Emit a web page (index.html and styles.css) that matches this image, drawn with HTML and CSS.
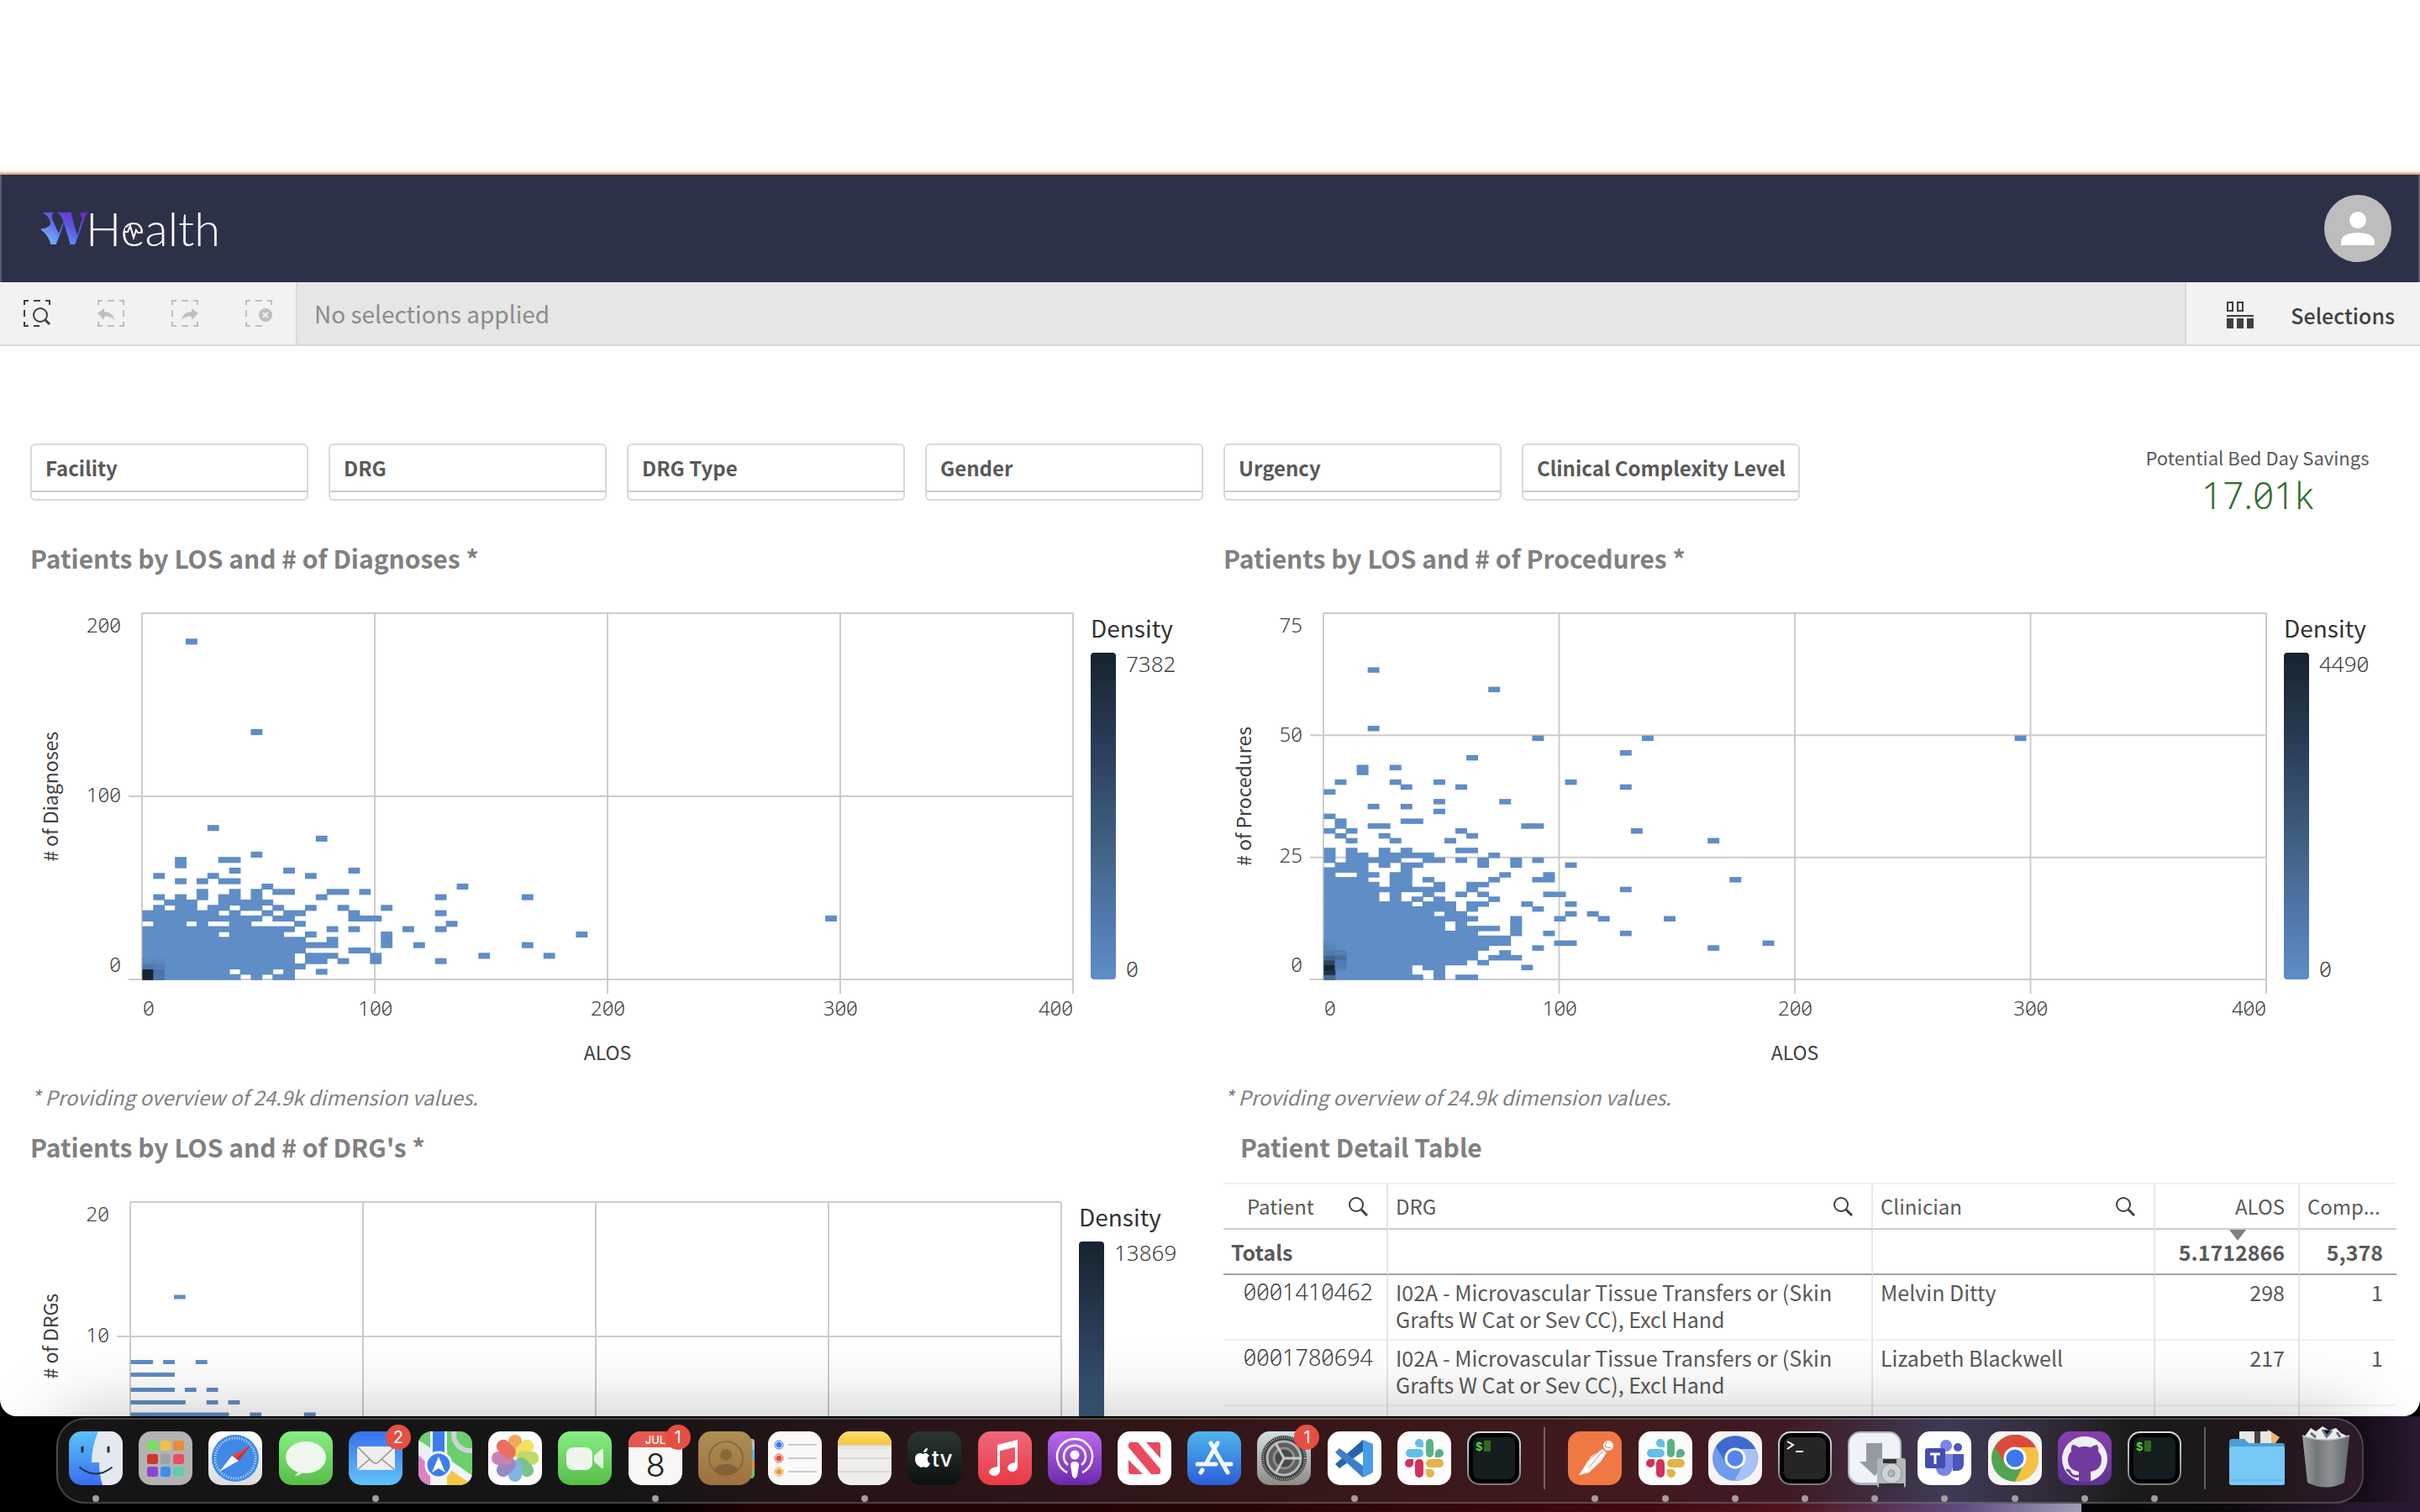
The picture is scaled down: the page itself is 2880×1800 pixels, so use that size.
FILE: index.html
```html
<!DOCTYPE html>
<html lang="en">
<head>
<meta charset="utf-8">
<title>WHealth</title>
<link rel="stylesheet" href="styles.css">
</head>
<body>
<svg class="defs" aria-hidden="true">
  <defs>
    <linearGradient id="gLogo" x1="1" y1="0" x2="0" y2="1"><stop offset="0" stop-color="#7a1fc8"/><stop offset=".4" stop-color="#5a55e0"/><stop offset="1" stop-color="#7cc4ff"/></linearGradient>
    <linearGradient id="gBlue" x2="0" y2="1"><stop stop-color="#5ac3f8"/><stop offset="1" stop-color="#3a6df0"/></linearGradient>
    <linearGradient id="gMail" x2="0" y2="1"><stop stop-color="#3a70ee"/><stop offset="1" stop-color="#5fc4fb"/></linearGradient>
    <linearGradient id="gStore" x2="0" y2="1"><stop stop-color="#4fb4ee"/><stop offset="1" stop-color="#2a5fd8"/></linearGradient>
    <linearGradient id="gGreen" x2="0" y2="1"><stop stop-color="#86ee82"/><stop offset="1" stop-color="#58bd48"/></linearGradient>
    <linearGradient id="gWhite" x2="0" y2="1"><stop stop-color="#fff"/><stop offset="1" stop-color="#dcdcdc"/></linearGradient>
    <linearGradient id="gRed" x2="0" y2="1"><stop stop-color="#f0677a"/><stop offset="1" stop-color="#e83a44"/></linearGradient>
    <linearGradient id="gPurple" x2="0" y2="1"><stop stop-color="#bc6af0"/><stop offset="1" stop-color="#6d28ab"/></linearGradient>
    <linearGradient id="gGit" x2="0" y2="1"><stop stop-color="#8a3fae"/><stop offset="1" stop-color="#5b3494"/></linearGradient>
    <linearGradient id="gYellow" x2="0" y2="1"><stop stop-color="#fbdf6b"/><stop offset="1" stop-color="#f5c63c"/></linearGradient>
    <linearGradient id="gBrown" x2="0" y2="1"><stop stop-color="#ae8e55"/><stop offset="1" stop-color="#9c7140"/></linearGradient>
    <linearGradient id="gTv" x2="0" y2="1"><stop stop-color="#2b3833"/><stop offset="1" stop-color="#0b0f11"/></linearGradient>
    <linearGradient id="gMetal" x2="0" y2="1"><stop stop-color="#d6e3ea"/><stop offset="1" stop-color="#77797b"/></linearGradient>
    <linearGradient id="gGrey" x2="0" y2="1"><stop stop-color="#d3dfe5"/><stop offset="1" stop-color="#8d8c88"/></linearGradient>
    <linearGradient id="gBin" x2="1" y2="0"><stop stop-color="#9ba0a2"/><stop offset=".3" stop-color="#73787a"/><stop offset=".6" stop-color="#8b9092"/><stop offset="1" stop-color="#65696b"/></linearGradient>
    <symbol id="lens" viewBox="0 0 24 24"><circle cx="10" cy="10" r="8" fill="none" stroke="currentColor" stroke-width="2"/><path d="M16 16l7 7" stroke="currentColor" stroke-width="3"/></symbol>
    <symbol id="slack" viewBox="0 0 64 64"><rect width="64" height="64" rx="15" fill="#fcfcfc"/>
      <g fill="#5fc0ea"><rect x="10" y="21" width="21" height="10" rx="5"/><path d="M31 19h-5a5 5 0 1 1 5-5z"/></g>
      <g fill="#58b283"><rect x="34" y="9" width="9" height="22" rx="5"/><path d="M45 31v-5a5 5 0 1 1 5 5z"/></g>
      <g fill="#e2b34a"><rect x="34" y="33" width="21" height="10" rx="5"/><path d="M34 45h5a5 5 0 1 1-5 5z"/></g>
      <g fill="#d3315a"><rect x="21" y="33" width="10" height="22" rx="5"/><path d="M19 33v5a5 5 0 1 1-5-5z"/></g></symbol>
    <symbol id="shell" viewBox="0 0 64 64"><rect width="64" height="64" rx="15" fill="url(#gMetal)"/><rect x="2" y="2" width="60" height="60" rx="13" fill="#000"/><rect x="7" y="7" width="50" height="50" rx="8" fill="#151d20"/></symbol>
  </defs>
</svg>

<div class="window">
  <header class="brandbar">
    <a class="logo" href="#" aria-label="WHealth">
      <svg class="logo-mark" viewBox="95 190 112 113" preserveAspectRatio="none"><g fill="url(#gLogo)"><path d="M100 190h27q-7 6-5 22l15 52 10-38 2 2-10 44-8 31h-12q-4-30-24-54 22-6 23-18 2-22-18-41zM133 190h35q-3 6 0 18l12 62 11-60q-6-12-3-20h19q-10 8-12 28l-20 85h-11l-16-80q-4-24-15-33z"/></g></svg>
      <span class="logo-text">Health</span>
      <svg class="logo-pulse" viewBox="0 0 22 20"><path d="M3 5h16v8H3z" fill="#2d3148"/><path d="M1 10h5l3-7 4 14 3-9 2 3h3" fill="none" stroke="#fff" stroke-width="2"/></svg>
    </a>
    <button class="avatar" aria-label="Account"><svg viewBox="0 0 80 80"><circle cx="40" cy="40" r="40" fill="#bdbdbd"/><circle cx="40" cy="30" r="10" fill="#fff"/><path d="M20 60v-5q2-10 20-10t20 10v5z" fill="#fff"/></svg></button>
  </header>

  <div class="toolbar">
    <div class="tools">
      <button aria-label="Smart search"><svg viewBox="0 0 32 32"><path d="M1 6V1h5M12 1h8M26 1h5v5M1 12v8M1 26v5h5M12 31h7" fill="none" stroke="currentColor" stroke-width="2"/><circle cx="20" cy="18" r="8" fill="none" stroke="currentColor" stroke-width="2"/><path d="M25 23l6 6" stroke="currentColor" stroke-width="3"/></svg></button>
      <button aria-label="Step back" disabled><svg viewBox="0 0 32 32"><path d="M1 6V1h5M12 1h8M26 1h5v5M31 12v8M1 26v5h5M12 31h8M31 26v5h-5" fill="none" stroke="currentColor" stroke-width="2"/><path d="M0 16l8-6v4q10 0 12 10-5-5-12-4v4z" fill="currentColor"/></svg></button>
      <button aria-label="Step forward" disabled><svg viewBox="0 0 32 32"><path d="M1 6V1h5M12 1h8M26 1h5v5M1 12v8M1 26v5h5M12 31h8M31 26v5h-5" fill="none" stroke="currentColor" stroke-width="2"/><path d="M32 16l-8-6v4q-10 0-12 10 5-5 12-4v4z" fill="currentColor"/></svg></button>
      <button aria-label="Clear all selections" disabled><svg viewBox="0 0 32 32"><path d="M1 6V1h5M12 1h8M26 1h5v5M1 12v8M1 26v5h5M12 31h8" fill="none" stroke="currentColor" stroke-width="2"/><circle cx="24" cy="18" r="8" fill="currentColor"/><path d="M21 15l6 6M27 15l-6 6" stroke="#f2f2f2" stroke-width="2"/></svg></button>
    </div>
    <p class="status">No selections applied</p>
    <button class="selections"><svg viewBox="0 0 32 32"><path d="M1 1h6v10H1zM13 1h6v10h-6z" fill="none" stroke="currentColor" stroke-width="2"/><path d="M0 16h32v2H0zM0 20h8v12H0zM12 20h8v12h-8zM24 20h8v12h-8z" fill="currentColor"/></svg>Selections</button>
  </div>

  <main class="sheet">
    <button class="filter"><span>Facility</span></button>
    <button class="filter"><span>DRG</span></button>
    <button class="filter"><span>DRG Type</span></button>
    <button class="filter"><span>Gender</span></button>
    <button class="filter"><span>Urgency</span></button>
    <button class="filter"><span>Clinical Complexity Level</span></button>
    <section class="kpi"><h2>Potential Bed Day Savings</h2><p>17.01k</p></section>

    <section class="card">
      <h2 class="title">Patients by LOS and # of Diagnoses *</h2>
      <div class="chart chart-wide-axis">
        <div class="y-title"><span># of Diagnoses</span></div>
        <div class="y-axis"><span>200</span><span>100</span><span>0</span></div>
        <svg class="plot" data-chart="diagnoses"></svg>
        <div class="legend"><h3>Density</h3><div class="scale"><i></i><div class="range"><span>7382</span><span>0</span></div></div></div>
        <div class="x-axis"><span>0</span><span>100</span><span>200</span><span>300</span><span>400</span></div>
        <div class="x-title">ALOS</div>
      </div>
      <p class="note">* Providing overview of 24.9k dimension values.</p>
    </section>

    <section class="card">
      <h2 class="title">Patients by LOS and # of Procedures *</h2>
      <div class="chart">
        <div class="y-title"><span># of Procedures</span></div>
        <div class="y-axis"><span>75</span><span>50</span><span>25</span><span>0</span></div>
        <svg class="plot" data-chart="procedures"></svg>
        <div class="legend"><h3>Density</h3><div class="scale"><i></i><div class="range"><span>4490</span><span>0</span></div></div></div>
        <div class="x-axis"><span>0</span><span>100</span><span>200</span><span>300</span><span>400</span></div>
        <div class="x-title">ALOS</div>
      </div>
      <p class="note">* Providing overview of 24.9k dimension values.</p>
    </section>

    <section class="card">
      <h2 class="title">Patients by LOS and # of DRG's *</h2>
      <div class="chart chart-wide-legend chart-short">
        <div class="y-title"><span># of DRGs</span></div>
        <div class="y-axis"><span>20</span><span>10</span><span></span></div>
        <svg class="plot" data-chart="drgs"></svg>
        <div class="legend"><h3>Density</h3><div class="scale"><i></i><div class="range"><span>13869</span></div></div></div>
      </div>
    </section>

    <section class="card">
      <h2 class="title title-table">Patient Detail Table</h2>
      <table class="details">
        <colgroup><col class="c-patient"><col><col class="c-clinician"><col class="c-alos"><col class="c-comp"></colgroup>
        <thead>
          <tr><th><div class="head head-in">Patient<button aria-label="Search Patient"><svg><use href="#lens"/></svg></button></div></th>
          <th><div class="head">DRG<button aria-label="Search DRG"><svg><use href="#lens"/></svg></button></div></th>
          <th><div class="head">Clinician<button aria-label="Search Clinician"><svg><use href="#lens"/></svg></button></div></th>
          <th class="num sorted">ALOS</th><th>Comp...</th></tr>
          <tr class="totals"><th>Totals</th><td></td><td></td><td class="num">5.1712866</td><td class="num">5,378</td></tr>
        </thead>
        <tbody>
          <tr><td class="num id">0001410462</td><td>I02A - Microvascular Tissue Transfers or (Skin<br>Grafts W Cat or Sev CC), Excl Hand</td><td>Melvin Ditty</td><td class="num">298</td><td class="num">1</td></tr>
          <tr><td class="num id">0001780694</td><td>I02A - Microvascular Tissue Transfers or (Skin<br>Grafts W Cat or Sev CC), Excl Hand</td><td>Lizabeth Blackwell</td><td class="num">217</td><td class="num">1</td></tr>
          <tr class="spare"><td></td><td></td><td></td><td></td><td></td></tr>
        </tbody>
      </table>
    </section>
  </main>
</div>

<footer class="desktop">
<nav class="dock" aria-label="Dock">
  <button class="app open" aria-label="Finder"><svg viewBox="0 0 64 64"><clipPath id="r"><rect width="64" height="64" rx="15"/></clipPath><g clip-path="url(#r)"><rect width="64" height="64" fill="url(#gBlue)"/><path d="M35 0q-8 18-8 37h9q0 15 4 27h24V0z" fill="#e4e8ef"/></g><path d="M16 19v5M47 19v5" stroke="#23303f" stroke-width="3" stroke-linecap="round"/><path d="M13 43q19 15 38 0" fill="none" stroke="#23303f" stroke-width="2" stroke-linecap="round"/></svg></button>
  <button class="app" aria-label="Launchpad"><svg viewBox="0 0 64 64"><rect width="64" height="64" rx="15" fill="#b3b3b4"/><rect x="10" y="11" width="13" height="12" rx="3" fill="#78e05c"/><rect x="26" y="11" width="12" height="12" rx="3" fill="#f2c04b"/><rect x="41" y="11" width="13" height="12" rx="3" fill="#e88c3a"/><rect x="10" y="27" width="13" height="12" rx="3" fill="#d0332a"/><rect x="26" y="27" width="12" height="12" rx="3" fill="#9aa4a8"/><rect x="41" y="27" width="13" height="12" rx="3" fill="#ea4c62"/><rect x="10" y="42" width="13" height="12" rx="3" fill="#9043cf"/><rect x="26" y="42" width="12" height="12" rx="3" fill="#3d8df4"/><rect x="41" y="42" width="13" height="12" rx="3" fill="#62cdae"/></svg></button>
  <button class="app" aria-label="Safari"><svg viewBox="0 0 64 64"><rect width="64" height="64" rx="15" fill="url(#gWhite)"/><circle cx="32" cy="32" r="28" fill="#3f8ae8"/><circle cx="32" cy="32" r="24" fill="none" stroke="#cfe4fb" stroke-width="3" stroke-dasharray="1 2"/><path d="M51 16L28 29l4 4z" fill="#e8443a"/><path d="M51 16L36 35l-4-2z" fill="#c5302a"/><path d="M13 48l15-19 8 6z" fill="#f4f6f8"/></svg></button>
  <button class="app" aria-label="Messages"><svg viewBox="0 0 64 64"><rect width="64" height="64" rx="15" fill="url(#gGreen)"/><ellipse cx="32" cy="31" rx="24" ry="19" fill="#f0f7ee"/><path d="M22 46q1 5-4 7 7 0 11-5z" fill="#e6f3e2"/></svg></button>
  <button class="app open" aria-label="Mail"><svg viewBox="0 0 64 64"><rect width="64" height="64" rx="15" fill="url(#gMail)"/><rect x="10" y="18" width="45" height="28" rx="3" fill="#eeeeef"/><path d="M11 19l17 17q4 4 8 0l18-17M11 45l14-12M54 45L39 33" fill="none" stroke="#8e9296" stroke-width="1.5"/></svg><span class="badge">2</span></button>
  <button class="app" aria-label="Maps"><svg viewBox="0 0 64 64"><g clip-path="url(#r)"><rect width="64" height="64" fill="#6bd06b"/><path d="M0 10l64 44v10H14L0 52z" fill="#eceef2"/><path d="M0 28l14 14v22H0z" fill="#dc82c4"/><path d="M34 42l30 22H34z" fill="#f4c846"/><path d="M32 36l32 22" stroke="#f3f4f6" stroke-width="9"/><path d="M14 0h20v64H14z" fill="#f4f5f7"/><path d="M17 0h14v28H17z" fill="#3c7df0"/><circle cx="61" cy="4" r="19" fill="none" stroke="#cdd1d6" stroke-width="6"/></g><circle cx="24" cy="40" r="15" fill="#3c7df0" stroke="#f4f6fa" stroke-width="3"/><path d="M24 30l8 19-8-5-8 5z" fill="#fff"/></svg></button>
  <button class="app" aria-label="Photos"><svg viewBox="0 0 64 64"><rect width="64" height="64" rx="15" fill="#fcfcfc"/><g opacity=".85"><rect x="24" y="4" width="16" height="26" rx="8" fill="#f29a38"/><rect x="24" y="4" width="16" height="26" rx="8" fill="#f0dc46" transform="rotate(45 32 32)"/><rect x="24" y="4" width="16" height="26" rx="8" fill="#b9d24f" transform="rotate(90 32 32)"/><rect x="24" y="4" width="16" height="26" rx="8" fill="#66b878" transform="rotate(135 32 32)"/><rect x="24" y="4" width="16" height="26" rx="8" fill="#6ea8de" transform="rotate(180 32 32)"/><rect x="24" y="4" width="16" height="26" rx="8" fill="#8477bb" transform="rotate(225 32 32)"/><rect x="24" y="4" width="16" height="26" rx="8" fill="#bf6fa8" transform="rotate(270 32 32)"/><rect x="24" y="4" width="16" height="26" rx="8" fill="#e95548" transform="rotate(315 32 32)"/></g></svg></button>
  <button class="app" aria-label="FaceTime"><svg viewBox="0 0 64 64"><rect width="64" height="64" rx="15" fill="url(#gGreen)"/><rect x="10" y="19" width="31" height="27" rx="8" fill="#eef6ec"/><path d="M43 29l9-8q2-1 2 1v21q0 2-2 1l-9-8z" fill="#e4f1e0"/></svg></button>
  <button class="app open" aria-label="Calendar"><svg viewBox="0 0 64 64"><g clip-path="url(#r)"><rect width="64" height="64" fill="#f8f7f5"/><rect width="64" height="19" fill="#e5584f"/></g><text x="32" y="15" text-anchor="middle" class="cal-month">JUL</text><text x="32" y="54" text-anchor="middle" class="cal-day">8</text></svg><span class="badge">1</span></button>
  <button class="app" aria-label="Contacts"><svg viewBox="0 0 64 64"><path d="M60 9h4q3 0 3 4v10h-7z" fill="#b9bcbd"/><path d="M60 22h7v12h-7z" fill="#5bb0e8"/><path d="M60 34h7v11h-7z" fill="#ee8c2e"/><path d="M60 45h7v6q0 5-4 5h-3z" fill="#67c95c"/><rect width="64" height="64" rx="15" fill="url(#gBrown)"/><circle cx="33" cy="32" r="20" fill="none" stroke="#82633a" stroke-width="1.5"/><circle cx="33" cy="28" r="7" fill="#8a6838"/><path d="M19 46q3-7 14-7t14 7q-14 12-28 0z" fill="#82603a"/></svg></button>
  <button class="app" aria-label="Reminders"><svg viewBox="0 0 64 64"><rect width="64" height="64" rx="15" fill="#faf9f8"/><g stroke="#b9bbbd" stroke-width="1.5"><path d="M24 16h34M24 32h34M24 48h34"/></g><g fill="#fff" stroke-width="1"><circle cx="13" cy="16" r="5" stroke="#3478f0"/><circle cx="13" cy="32" r="5" stroke="#e8503c"/><circle cx="13" cy="48" r="5" stroke="#ec9a34"/></g><circle cx="13" cy="16" r="3.5" fill="#3478f0"/><circle cx="13" cy="32" r="3.5" fill="#e8503c"/><circle cx="13" cy="48" r="3.5" fill="#ec9a34"/></svg></button>
  <button class="app open" aria-label="Notes"><svg viewBox="0 0 64 64"><g clip-path="url(#r)"><rect width="64" height="64" fill="#efeeea"/><rect width="64" height="16" fill="url(#gYellow)"/></g><path d="M0 17h64M0 32h64M0 48h64" stroke="#c3c3c3" stroke-width="1"/><path d="M2 20h60" stroke="#aaa" stroke-dasharray="1 2"/></svg></button>
  <button class="app" aria-label="TV"><svg viewBox="0 0 64 64"><rect width="64" height="64" rx="15" fill="url(#gTv)"/><path d="M19 25q1-5 5-5 0 5-5 5zM9 33q0-7 6-7 2 0 3 1 2-1 4-1 2 0 4 3-3 2-2 5 0 3 3 4-2 5-5 5-2 0-3-1-2 1-3 1-7-3-7-10z" fill="#fff"/><text x="29" y="42" class="tv">tv</text></svg></button>
  <button class="app" aria-label="Music"><svg viewBox="0 0 64 64"><rect width="64" height="64" rx="15" fill="url(#gRed)"/><path d="M23 16l24-6v5l-21 6v26q-1 6-7 6-6-1-6-5 1-5 10-6zM44 12h3v30q-1 6-7 6-5-1-5-5 1-5 9-6zM23 16l24-6v8l-24 6z" fill="#fff"/></svg></button>
  <button class="app" aria-label="Podcasts"><svg viewBox="0 0 64 64"><rect width="64" height="64" rx="15" fill="url(#gPurple)"/><g fill="none" stroke="#fff" stroke-width="2.5"><path d="M23 49a21 21 0 1 1 18 0"/><path d="M24 40a13 13 0 1 1 16 0"/></g><circle cx="32" cy="28" r="5.5" fill="#fff"/><path d="M27 40q0-4 5-4t5 4l-2 13q-3 6-6 0z" fill="#fff"/></svg></button>
  <button class="app" aria-label="News"><svg viewBox="0 0 64 64"><rect width="64" height="64" rx="15" fill="#fff"/><path d="M13 16q0-3 3-3h8l27 32v3q0 3-3 3h-8L13 19zM34 13h14q3 0 3 3v16zM13 34l17 17H16q-3 0-3-3z" fill="#ea4a5d"/></svg></button>
  <button class="app" aria-label="App Store"><svg viewBox="0 0 64 64"><rect width="64" height="64" rx="15" fill="url(#gStore)"/><g stroke="#f2f7fc" stroke-width="5" stroke-linecap="round"><path d="M36 14L22 39M28 14l20 35M12 39h22M44 39h8M18 46l-2 3"/></g></svg></button>
  <button class="app" aria-label="System Preferences"><svg viewBox="0 0 64 64"><rect width="64" height="64" rx="15" fill="url(#gGrey)"/><circle cx="32" cy="32" r="27" fill="#3b3b3b"/><circle cx="32" cy="32" r="25" fill="none" stroke="#aaa" stroke-width="3" stroke-dasharray="1 1.5"/><circle cx="32" cy="32" r="20" fill="#5e5f60" stroke="#b5b6b6" stroke-width="3"/><circle cx="32" cy="32" r="12" fill="#48494a" stroke="#8b8c8c" stroke-width="3"/><path d="M32 32h20M32 32L22 14M32 32L22 50" stroke="#c6c8c8" stroke-width="3"/></svg><span class="badge">1</span></button>
  <button class="app open" aria-label="Visual Studio Code"><svg viewBox="0 0 64 64"><rect width="64" height="64" rx="15" fill="#fff"/><path d="M9 39L42 10v14L14 44z" fill="#2763a8"/><path d="M9 25l5-5 28 21v14z" fill="#3a7fc9"/><path d="M42 10l12 5v34l-12 6z" fill="#4a9bea"/></svg></button>
  <button class="app" aria-label="Slack"><svg><use href="#slack"/></svg></button>
  <button class="app" aria-label="iTerm"><svg viewBox="0 0 64 64"><use href="#shell"/><text x="10" y="23" class="prompt">$</text><rect x="20" y="11" width="8" height="13" fill="#2f6a20"/></svg></button>
  <hr>
  <button class="app open" aria-label="Postman"><svg viewBox="0 0 64 64"><rect width="64" height="64" rx="15" fill="#f07845"/><circle cx="48" cy="17" r="6" fill="#fff"/><path d="M46 12l-2 6 7 2" fill="none" stroke="#f07845"/><path d="M41 21l5 4-7 11-14 13-12 3 6-9 8-13z" fill="#fff"/><path d="M41 24L25 43M37 24L22 36" stroke="#f07845"/></svg></button>
  <button class="app open" aria-label="Slack"><svg><use href="#slack"/></svg></button>
  <button class="app open" aria-label="Chromium"><svg viewBox="0 0 64 64"><rect width="64" height="64" rx="15" fill="#f5f5f6"/><circle cx="32" cy="32" r="27" fill="#6f9bea"/><path d="M32 21h24A27 27 0 0 0 9 18l12 20q0-16 11-17z" fill="#3f69cc"/><path d="M32 21h24a27 27 0 0 1-25 38l12-22q2-12-11-16z" fill="#a6c2f6"/><circle cx="32" cy="32" r="11" fill="#5384ee" stroke="#fff" stroke-width="3"/></svg></button>
  <button class="app open" aria-label="Terminal"><svg viewBox="0 0 64 64"><rect width="64" height="64" rx="15" fill="url(#gMetal)"/><rect x="2" y="2" width="60" height="60" rx="13" fill="#000"/><rect x="7" y="7" width="50" height="50" rx="8" fill="#252525"/><path d="M11 12l7 4-7 5M21 24h9" fill="none" stroke="#fff" stroke-width="2"/></svg></button>
  <button class="app open" aria-label="Installer"><svg viewBox="0 0 64 64"><rect width="64" height="64" rx="15" fill="#a9b6c0"/><rect x="2" y="2" width="60" height="59" rx="13" fill="#eff3f7"/><path d="M22 14h19v22h9L32 53 14 36h8z" fill="#929ba0"/><rect x="35" y="32" width="34" height="35" rx="3" fill="#b0b8bd"/><circle cx="52" cy="50" r="12" fill="#ccd2d5" stroke="#8c9396"/><circle cx="52" cy="50" r="4" fill="#b0b8bd" stroke="#8c9396"/><path d="M42 33h16v5H42zM37 62h30v5H37z" fill="#333"/></svg></button>
  <button class="app open" aria-label="Teams"><svg viewBox="0 0 64 64"><rect width="64" height="64" rx="15" fill="#fff"/><circle cx="34" cy="17" r="7" fill="#7b83e4"/><circle cx="48" cy="19" r="5" fill="#4f56bb"/><path d="M42 27h13v13q-1 7-8 7h-5z" fill="#4f56bb"/><path d="M22 27h20v16q-2 10-10 10t-10-8z" fill="#7b83e4"/><rect x="9" y="20" width="24" height="24" rx="3" fill="#454db0"/><path d="M15 27h12M21 27v12" stroke="#fff" stroke-width="3"/></svg></button>
  <button class="app open" aria-label="Chrome"><svg viewBox="0 0 64 64"><rect width="64" height="64" rx="15" fill="#f5f5f5"/><circle cx="32" cy="32" r="28" fill="#51a451"/><path d="M32 19h25A28 28 0 0 0 8 18l13 22q-2-18 11-21z" fill="#da4b3c"/><path d="M32 19h25a28 28 0 0 1-25 41l11-22q2-14-11-19z" fill="#f4c143"/><circle cx="32" cy="32" r="12" fill="#3c78e8" stroke="#fff" stroke-width="3"/></svg></button>
  <button class="app open" aria-label="GitHub"><svg viewBox="0 0 64 64"><rect width="64" height="64" rx="15" fill="url(#gGit)"/><circle cx="32" cy="33" r="27" fill="#f1f0f6"/><path d="M25 60V48q-13-2-13-15 0-5 4-9-1-4 1-8 4 0 8 3 7-2 14 0 4-3 8-3 2 4 1 8 4 4 4 9 0 13-13 15v12z" fill="#713a9f"/><path d="M25 53q-8 2-11-5-1-2-4-2" fill="none" stroke="#713a9f" stroke-width="3"/></svg></button>
  <button class="app open" aria-label="iTerm"><svg viewBox="0 0 64 64"><use href="#shell"/><text x="10" y="23" class="prompt">$</text><rect x="20" y="11" width="8" height="13" fill="#2f6a20"/></svg></button>
  <hr>
  <button class="app" aria-label="Downloads"><svg viewBox="0 0 64 64"><path d="M46-2l14 9-10 14H34z" fill="#f2b070"/><path d="M12 0h38v16H12z" fill="#e8e6e2"/><path d="M30 0h7v16h-7z" fill="#444"/><path d="M0 13q0-4 4-4h14l5 5h40q3 0 3 4v42q0 4-3 4H3q-3 0-3-4z" fill="#4a9fd6"/><rect y="18" width="66" height="46" rx="3" fill="#78c8f8"/><path d="M0 58h66" stroke="#5ab0e4"/></svg></button>
  <button class="app" aria-label="Bin"><svg viewBox="0 0 64 64"><path d="M6 7l8-11 6 4 8-6 8 5 8-3 6 6 8 4-3 5H8z" fill="#ecebe8"/><path d="M14 2l6 5M28-2l5 8 6-7M45 1l4 6" stroke="#5b6f86" stroke-width="3"/><path d="M4 5q28 10 56 0l-6 56q-22 11-44 0z" fill="url(#gBin)"/><path d="M4 5q28 10 56 0" fill="none" stroke="#c3c7c9" stroke-width="1.5"/></svg></button>
</nav>
</footer>
<script src="charts.js"></script>
</body>
</html>
```
FILE: styles.css
```css
* { box-sizing: border-box; margin: 0; padding: 0; }
:root {
  --text: "Noto Sans CJK SC", "Noto Sans", sans-serif;
  --digits: "Noto Sans", "Noto Sans CJK SC", sans-serif;
  --ink: #595959;
  --line: #cccccc;
}
body {
  display: flex; flex-direction: column; height: 100vh; overflow: hidden;
  font-family: var(--text); font-size: 24px; line-height: 32px; color: var(--ink); background: #000;
}
button { font: inherit; color: inherit; background: none; border: 0; }
h2, h3, th { font-weight: 400; }
.defs { position: absolute; width: 0; height: 0; }

.window { flex: 1; min-height: 0; overflow: hidden; background: #fff; border-radius: 0 0 20px 20px; padding-top: 204px; }

.brandbar {
  display: flex; justify-content: space-between; align-items: center; height: 132px; padding: 2px 34px 0 48px;
  background: #2d3148; border-top: 2px solid #fbdcb6; box-shadow: inset 0 2px #c8ad88, inset 2px 0 #575b6e, inset -2px 0 #575b6e;
}
.logo { position: relative; display: flex; align-items: center; color: #fff; text-decoration: none; }
.logo-mark { width: 58px; height: 38px; }
.logo-text { margin-left: -4px; font: 300 56px/60px Lato, sans-serif; }
.logo-pulse { position: absolute; left: 98px; top: 24px; width: 22px; height: 20px; }
.avatar, .avatar svg { display: block; width: 80px; height: 80px; }

.toolbar { display: flex; height: 76px; background: #e6e6e6; border-bottom: 2px solid #d9d9d9; }
.tools { display: flex; align-items: center; gap: 56px; padding: 0 28px; background: #f2f2f2; border-right: 2px solid #d9d9d9; color: #404040; }
.tools button, .tools svg { display: block; width: 32px; height: 32px; }
.tools button:disabled { color: #bfbfbf; }
.status { flex: 1; padding-left: 20px; font-size: 28px; line-height: 74px; color: #8c8c8c; }
.selections { display: flex; align-items: center; gap: 44px; padding: 4px 30px 0 48px; background: #f2f2f2; border-left: 2px solid #d9d9d9; color: #404040; font-size: 25px; font-weight: 500; }
.selections svg { width: 32px; height: 32px; }

.sheet { display: grid; grid-template-columns: repeat(8, 1fr); grid-template-rows: 112px; column-gap: 24px; padding: 116px 28px 0 36px; }
.filter { height: 68px; border: 2px solid #d9d9d9; border-radius: 6px; padding-bottom: 8px; text-align: left; font-weight: 700; }
.filter span { display: block; padding-left: 16px; line-height: 54px; border-bottom: 2px solid var(--line); white-space: nowrap; }
.kpi { grid-column: 8; text-align: center; }
.kpi h2 { font-size: 22px; line-height: 32px; }
.kpi p { margin-top: 5px; font: 300 44px/48px var(--digits); font-feature-settings: "zero"; color: #2f6f2a; }

.card { grid-column: span 4; height: 701px; }
.title { font-size: 30px; font-weight: 700; line-height: 48px; color: #808080; margin-bottom: 42px; }
.chart { --axis: 69px; --legend: 155px; display: grid; grid-template-columns: 50px var(--axis) 1fr var(--legend); grid-template-rows: 436px 64px 44px; }
.chart-wide-axis { --axis: 83px; }
.chart-wide-legend { --legend: 169px; }
.chart-short { grid-template-rows: 320px; }
.y-title { display: flex; align-items: center; justify-content: center; padding-right: 5px; font-size: 23px; color: #404040; }
.y-title span { writing-mode: vertical-rl; transform: rotate(180deg); }
.y-axis, .x-axis, .range { font: 300 24px/28px var(--digits); font-feature-settings: "zero"; color: #404040; }
.y-axis { display: flex; flex-direction: column; align-items: flex-end; padding: 0 25px 4px 0; }
.x-axis { grid-column: 3; display: flex; padding-top: 20px; }
.y-axis span, .x-axis span { flex: 2 0 0; display: flex; align-items: center; justify-content: center; }
.x-axis span { align-items: flex-start; }
.y-axis span:first-child, .x-axis span:first-child { flex-grow: 1; }
.y-axis span:last-child, .x-axis span:last-child { flex-grow: 1; }
.y-axis span:first-child { align-items: flex-start; }
.y-axis span:last-child { align-items: flex-end; }
.x-axis span:first-child { justify-content: flex-start; padding-left: 1px; }
.x-axis span:last-child { justify-content: flex-end; }
.x-title { grid-column: 3; text-align: center; font-size: 23px; line-height: 44px; color: #404040; }
.plot { width: 100%; height: 100%; overflow: visible; }
.plot line { stroke: var(--line); stroke-width: 2; }
.plot rect { fill: #5f8dc6; }
.legend { display: flex; flex-direction: column; padding-left: 21px; }
.legend h3 { font-size: 28px; line-height: 34px; color: #333; margin-bottom: 13px; }
.scale { flex: 1; display: flex; gap: 12px; }
.scale i { width: 30px; border-radius: 4px; background: linear-gradient(#17232f, #1f2e3d 12%, #293b57 27%, #36516f 45%, #47688f 66%, #5179ae 82%, #5f8dc6); }
.range { display: flex; flex-direction: column; justify-content: space-between; font-size: 26px; line-height: 26px; }
.note { padding-left: 1px; margin-top: 16px; font-size: 24px; font-style: italic; color: #808080; }
.chart-short .scale { flex: 0 0 auto; height: 390px; }

.title-table { padding-left: 20px; margin-bottom: 19px; }
.details { width: 100%; table-layout: fixed; border-collapse: separate; border-spacing: 0; border-top: 2px solid #f0f0f0; text-align: left; }
.c-patient { width: 196px; } .c-clinician { width: 336px; } .c-alos { width: 172px; } .c-comp { width: 115px; }
.details th, .details td { height: 78px; padding: 4px 16px 8px 9px; border-bottom: 2px solid #f0f0f0; border-right: 2px solid #e6e6e6; vertical-align: top; white-space: nowrap; }
.details td { font-size: 25px; }
.details tr > :last-child { border-right: 0; }
.details thead th, .details thead td { height: 54px; padding: 0 16px 0 9px; vertical-align: middle; border-bottom-color: var(--line); }
.details tr.totals th, .details tr.totals td { font-weight: 700; font-size: 25px; border-bottom-color: #a0a0a0; }
.details .num { text-align: right; }
.details .id { font: 300 27px/32px var(--digits); font-feature-settings: "zero"; color: #404040; }
.head { display: flex; justify-content: space-between; align-items: center; }
.head-in { padding-left: 19px; }
.head button, .head svg { display: block; width: 24px; height: 24px; }
.head button { margin-right: 6px; color: #404040; }
.sorted { position: relative; }
.sorted::after { content: ""; position: absolute; right: 62px; top: 54px; border: 10px solid transparent; border-top: 13px solid #808080; border-bottom: 0; }

.desktop {
  padding: 2px 67px 10px; height: 114px;
  background:
    linear-gradient(90deg, #000 0 27%, #240202 31%, #2a0505 50%, #4a0c10 68%, #5a1820 74%, #6b5590 81%, #b8b2d0 86%, #050505 86%, #0a0709 91%, #2a1830 97%, #2c1a33) bottom / 100% 12px no-repeat,
    linear-gradient(90deg, #000 0 95%, #2c1a33);
}
.dock {
  position: relative; display: flex; justify-content: space-between; align-items: center; height: 102px; padding: 0 11px 6px 13px;
  border: 2px solid rgba(255, 255, 255, .2); border-radius: 34px;
  background: linear-gradient(90deg, #151515 0 24%, #231416 32%, #331618 50%, #401a1c 67%, #3f1a24 75%, #3f3a55 82%, #332c3c 86%, #1b1a1a 90%, #201719 95%, #2c1a2a);
  box-shadow: 0 0 90px rgba(0, 0, 0, .26);
}
.dock hr { width: 2px; height: 74px; margin: 0 8px; border: 0; background: rgba(255, 255, 255, .3); }
.app { position: relative; width: 64px; height: 64px; }
.app svg { display: block; width: 64px; height: 64px; overflow: visible; }
.open::after { content: ""; position: absolute; left: 28px; top: 76px; width: 8px; height: 8px; border-radius: 50%; background: #a89c9c; }
.badge { position: absolute; right: -10px; top: -8px; width: 30px; height: 30px; border-radius: 50%; background: #e64f42; color: #fff; font: 400 20px/30px Inter, sans-serif; }
.cal-month { font: 500 13px Inter, sans-serif; fill: #fff; }
.cal-day { font: 300 38px Inter, sans-serif; fill: #222; }
.tv { font: 500 26px Inter, sans-serif; fill: #fff; }
.prompt { font: 700 14px "Liberation Mono", monospace; fill: #5edb3d; }
```
FILE: charts.js
```js
// Binned density plots. Each row lists filled columns, counted from the lower left corner.
const charts = {
  diagnoses: {
    bands: 2, cellW: 12.9 / 1108, cellH: 6.34 / 436,
    rows: {
      63: "4", 46: "10", 28: "6", 26: "16", 23: "10", 22: "3 7-8", 21: "3", 20: "8 13 19", 19: "1 6 15",
      18: "3 5 7-8", 17: "11 29", 16: "5 8 10 12-13 17-18 20", 15: "1 3 5 7-8 10 16 27 35", 14: "2-4 7-11",
      13: "1 3-4 6-7 9-10 12 15 18 22", 12: "0-6 8 11 13-14 19 27", 11: "0-10 12-13 19-21 63",
      10: "1-3 5 8-9 14 28", 9: "0-13 17 19 24 27", 8: "0-6 8-12 15 22 40", 7: "0-14 17 22",
      6: "0-17 22 25 35", 5: "0-14 19-20", 4: "0-13 15-17 21 31 37", 3: "0-13 15-16 18 21 27", 2: "0-14",
      1: "0-7 9-11 13 16", 0: "0-8 10 12-13"
    },
    dense: [[0, 0, "#17232f"], [0, 1, "#17232f"], [1, 0, "#4f75a5"], [1, 1, "#4f75a5"], [0, 2, "#5179ae"], [1, 2, "#557fb6"], [0, 3, "#5c89c0"], [1, 3, "#5c89c0"]]
  },
  procedures: {
    bands: 3, cellW: 13.05 / 1122, cellH: 5.807 / 436,
    rows: {
      63: "4", 59: "15", 51: "4", 49: "19 29 63", 46: "27", 45: "13", 43: "3 6", 42: "3", 40: "1 6 10 22",
      39: "7 12 27", 38: "0", 36: "10 16", 35: "4 7", 34: "10", 33: "0", 32: "1 7-8", 31: "1 4-5 18-19",
      30: "0 2 12 28", 29: "1 5 13", 28: "2 6 11 35", 26: "0 2 5 7 12-13", 25: "0 2-3 5-9 15",
      24: "0 2-6 9-10 12 14 17 19", 23: "1-3 5 7-8 14 17 22", 22: "0-3 7", 21: "0 3-4 6-7 16 20",
      20: "0-3 6-7 9 15 19-20 37", 19: "0-4 6-7 10 13-14", 18: "0-10 13 27", 17: "0-4 6 9 12 14 20-21",
      16: "0-4 6 8 10 15", 15: "0-7 9-11 13-14 18 22", 14: "0-11 13 19", 13: "0-9 11-12 22 24",
      12: "0-13 17 21 25 31", 11: "0-10 12 17", 10: "0-10 12-15 17", 9: "0-13 17 20 27", 8: "0-16",
      7: "0-16 21-22 40", 6: "0-14 19 35", 5: "0-13 16", 4: "0-13 15-17", 3: "0-12 14", 2: "0-7 9-10 18",
      1: "0-7 10", 0: "0-8 10 12-13"
    },
    dense: [[0, 0, "#49698f"], [0, 1, "#22344a"], [0, 2, "#17232f"], [0, 3, "#2b4362"], [0, 4, "#43638c"], [1, 4, "#4b6f9b"], [0, 5, "#5178aa"], [1, 5, "#5580b5"], [1, 2, "#557fb5"], [1, 3, "#527ab0"], [0, 6, "#5884bb"], [0, 7, "#5b88c0"]]
  },
  drgs: {
    bands: 2, cellW: 12.9 / 1108, cellH: 5 / 320, flat: true,
    rows: { 40.9: "4", 25.4: "0-1 3 6", 22.4: "0-3", 18.8: "0-3 5 7", 15.8: "0-4 7 9", 12.9: "0-8 11 16" },
    dense: []
  }
};

const add = (parent, name, attrs) => {
  const el = document.createElementNS("http://www.w3.org/2000/svg", name);
  for (const key in attrs) el.setAttribute(key, attrs[key]);
  return parent.appendChild(el);
};

document.querySelectorAll(".plot").forEach(svg => {
  const c = charts[svg.dataset.chart];
  const pct = v => (v * 100).toFixed(3) + "%";
  for (let i = 0; i <= c.bands; i++) add(svg, "line", { x1: i ? -16 : 0, x2: "100%", y1: pct(i / c.bands), y2: pct(i / c.bands) });
  for (let i = 0; i <= 4; i++) {
    add(svg, "line", { x1: pct(i / 4), x2: pct(i / 4), y1: 0, y2: "100%" });
    if (i) add(add(svg, "svg", { x: pct(i / 4), y: "100%", overflow: "visible" }), "line", { x1: 0, x2: 0, y1: 0, y2: 17 });
  }
  const cell = (from, to, row, fill) => add(svg, "rect", {
    x: pct(from * c.cellW + .0004), width: pct((to - from + 1.07) * c.cellW),
    y: pct(1 - (row + 1) * c.cellH), height: pct((c.flat ? 1 : 1.12) * c.cellH), ...(fill && { style: "fill:" + fill })
  });
  for (const row in c.rows) c.rows[row].split(" ").forEach(run => {
    const [a, b = a] = run.split("-").map(Number);
    cell(a, b, +row);
  });
  c.dense.forEach(([col, row, fill]) => cell(col, col, row, fill));
});
```
